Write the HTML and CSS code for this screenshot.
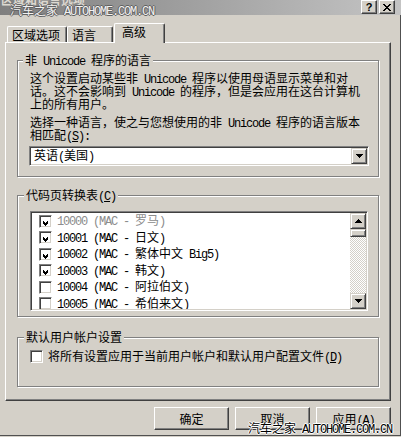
FILE: index.html
```html
<!DOCTYPE html>
<html>

	<head>
		<meta charset="UTF-8">
		<title>区域和语言选项</title>
		<link rel="stylesheet" href="styles.css">
	</head>

	<body>
		<div class="win">
			<div class="titlebar">
				<span class="title">区域和语言选项</span>
				<div class="capbtns">
					<span class="capbtn help">?</span>
					<span class="capbtn">
						<svg width="8" height="7" shape-rendering="crispEdges"><path d="M0 0h2v1H0z M6 0h2v1H6z M1 1h2v1H1z M5 1h2v1H5z M2 2h4v1H2z M3 3h2v1H3z M2 4h4v1H2z M1 5h2v1H1z M5 5h2v1H5z M0 6h2v1H0z M6 6h2v1H6z"/></svg>
					</span>
				</div>
			</div>

			<div class="content">
				<ul class="tabs">
					<li class="tab t1">区域选项</li>
					<li class="tab t2">语言</li>
					<li class="tab t3 current">高级</li>
				</ul>

				<div class="panel">
					<fieldset class="group g1">
						<legend>非<span class="en"> Unicode </span>程序的语言</legend>
						<p>
							<span class="line">这个设置启动某些非<span class="en"> Unicode </span>程序以使用母语显示菜单和对</span>
							<span class="line">话。这不会影响到<span class="en"> Unicode </span>的程序，但是会应用在这台计算机</span>
							<span class="line">上的所有用户。</span>
						</p>
						<p class="p2">
							<span class="line">选择一种语言，使之与您想使用的非<span class="en"> Unicode </span>程序的语言版本</span>
							<span class="line">相匹配<span class="en">(<u>S</u>):</span></span>
						</p>
						<div class="combo">
							<span class="combo-text">英语<span class="en">(</span>美国<span class="en">)</span></span>
							<span class="sbtn">
								<svg width="7" height="4" shape-rendering="crispEdges"><path d="M0 0h7v1H0z M1 1h5v1H1z M2 2h3v1H2z M3 3h1v1H3z"/></svg>
							</span>
						</div>
					</fieldset>

					<fieldset class="group g2">
						<legend>代码页转换表<span class="en">(<u>C</u>)</span></legend>
						<div class="listbox">
							<ul class="items">
								<li class="disabled">
									<span class="chk"><svg width="7" height="7" shape-rendering="crispEdges"><path d="M6 0h1v1H6z M5 1h2v1H5z M0 2h1v1H0z M4 2h3v1H4z M0 3h2v1H0z M3 3h3v1H3z M0 4h5v1H0z M1 5h3v1H1z M2 6h1v1H2z"/></svg></span>
									<span class="label"><span class="en">10000 (MAC - </span>罗马<span class="en">)</span></span>
								</li>
								<li>
									<span class="chk"><svg width="7" height="7" shape-rendering="crispEdges"><path d="M6 0h1v1H6z M5 1h2v1H5z M0 2h1v1H0z M4 2h3v1H4z M0 3h2v1H0z M3 3h3v1H3z M0 4h5v1H0z M1 5h3v1H1z M2 6h1v1H2z"/></svg></span>
									<span class="label"><span class="en">10001 (MAC - </span>日文<span class="en">)</span></span>
								</li>
								<li>
									<span class="chk"><svg width="7" height="7" shape-rendering="crispEdges"><path d="M6 0h1v1H6z M5 1h2v1H5z M0 2h1v1H0z M4 2h3v1H4z M0 3h2v1H0z M3 3h3v1H3z M0 4h5v1H0z M1 5h3v1H1z M2 6h1v1H2z"/></svg></span>
									<span class="label"><span class="en">10002 (MAC - </span>繁体中文<span class="en"> Big5)</span></span>
								</li>
								<li>
									<span class="chk"><svg width="7" height="7" shape-rendering="crispEdges"><path d="M6 0h1v1H6z M5 1h2v1H5z M0 2h1v1H0z M4 2h3v1H4z M0 3h2v1H0z M3 3h3v1H3z M0 4h5v1H0z M1 5h3v1H1z M2 6h1v1H2z"/></svg></span>
									<span class="label"><span class="en">10003 (MAC - </span>韩文<span class="en">)</span></span>
								</li>
								<li>
									<span class="chk"></span>
									<span class="label"><span class="en">10004 (MAC - </span>阿拉伯文<span class="en">)</span></span>
								</li>
								<li>
									<span class="chk"></span>
									<span class="label"><span class="en">10005 (MAC - </span>希伯来文<span class="en">)</span></span>
								</li>
							</ul>
							<div class="vscroll">
								<span class="sbtn">
									<svg width="7" height="4" shape-rendering="crispEdges"><path d="M3 0h1v1H3z M2 1h3v1H2z M1 2h5v1H1z M0 3h7v1H0z"/></svg>
								</span>
								<span class="thumb"></span>
								<span class="track"></span>
								<span class="sbtn">
									<svg width="7" height="4" shape-rendering="crispEdges"><path d="M0 0h7v1H0z M1 1h5v1H1z M2 2h3v1H2z M3 3h1v1H3z"/></svg>
								</span>
							</div>
						</div>
					</fieldset>

					<fieldset class="group g3">
						<legend>默认用户帐户设置</legend>
						<label class="check-row">
							<span class="chk"></span>
							<span>将所有设置应用于当前用户帐户和默认用户配置文件<span class="en">(<u>D</u>)</span></span>
						</label>
					</fieldset>
				</div>

				<div class="buttons">
					<span class="btn">确定</span>
					<span class="btn">取消</span>
					<span class="btn">应用<span class="en">(<u>A</u>)</span></span>
				</div>
			</div>

			<!-- 水印 -->
			<div class="wm wm-top">汽车之家<span class="en"> AUTOHOME.COM.CN</span></div>
			<div class="wm wm-bottom">汽车之家<span class="en"> AUTOHOME.COM.CN</span></div>
		</div>
	</body>

</html>
```

FILE: styles.css
```css
* {
	margin: 0;
	padding: 0;
	list-style: none;
	box-sizing: border-box;
}

body {
	width: 401px;
	height: 437px;
	overflow: hidden;
	background: #d4d0c8;
	font: 12px/14px "Noto Sans CJK SC", sans-serif;
	color: #000;
}

.en {
	font-family: "Liberation Mono", monospace;
	font-size: 12px;
	letter-spacing: -1.2px;
}

.win {
	position: relative;
	height: 436px;
	display: flex;
	flex-direction: column;
}

/* 标题栏 */
.titlebar {
	flex: none;
	height: 15px;
	display: flex;
	justify-content: space-between;
	align-items: flex-start;
	background: linear-gradient(to right, #7f7f7f, #c4c4c4);
	overflow: hidden;
}

.titlebar .title {
	margin: -7px 0 0 1px;
	color: #dcd8d0;
	font-weight: bold;
}

.capbtns {
	display: flex;
	gap: 2px;
	margin-right: 6px;
}

.capbtn {
	width: 16px;
	height: 14px;
	display: flex;
	align-items: center;
	justify-content: center;
	background: #d4d0c8;
	border: 1px solid;
	border-color: #fff #404040 #404040 #fff;
	box-shadow: inset -1px -1px #808080;
}

.capbtn.help {
	font: bold 11px/12px "Liberation Sans", sans-serif;
}

.content {
	flex: 1;
	padding: 8px 8px 0 5px;
	border-right: 1px solid #505050;
	border-bottom: 1px solid #505050;
}

/* 选项卡 */
.tabs {
	display: flex;
	align-items: flex-end;
	height: 19px;
}

.tab {
	height: 16px;
	padding: 1px 0 0 4px;
	background: #d4d0c8;
	border: 1px solid;
	border-bottom: 0;
	border-color: #fff #404040 #fff #fff;
	border-radius: 2px 2px 0 0;
	box-shadow: inset -1px 0 #808080;
	white-space: nowrap;
}

.t1 {
	width: 60px;
	margin-left: 2px;
}

.t2 {
	width: 46px;
}

.t3 {
	width: 51px;
	margin-left: 1px;
	padding-left: 7px;
}

.tab.current {
	position: relative;
	z-index: 1;
	height: 20px;
	margin-bottom: -1px;
	padding-top: 1px;
}

.panel {
	width: 386px;
	height: 359px;
	padding: 10px 0 0 11px;
	border: 1px solid;
	border-color: #fff #404040 #404040 #fff;
	box-shadow: inset -1px -1px #808080;
	overflow: hidden;
}

/* 分组框 */
.group {
	width: 362px;
	min-width: 0;
	border: 1px solid #808080;
	box-shadow: inset 1px 1px #fff, 1px 1px #fff;
}

.group legend {
	height: 14px;
	margin-left: -6px;
	padding: 0 2px;
	line-height: 14px;
	background: #d4d0c8;
	white-space: nowrap;
}

.g1 {
	padding: 4px 10px 10px 11px;
}

.g1 p {
	padding-left: 1px;
}

.g1 .line {
	display: block;
	height: 13px;
	line-height: 13px;
	white-space: nowrap;
}

.g1 .p2 {
	margin-top: 5px;
}

.combo {
	width: 340px;
	height: 20px;
	margin-top: 5px;
	display: flex;
	align-items: center;
	justify-content: space-between;
	background: #fff;
	border: 1px solid;
	border-color: #808080 #fff #fff #808080;
	box-shadow: inset 1px 1px #404040, inset -1px -1px #d4d0c8;
	padding: 1px;
}

.combo-text {
	padding-left: 3px;
}

.sbtn {
	flex: none;
	width: 16px;
	height: 16px;
	display: flex;
	align-items: center;
	justify-content: center;
	background: #d4d0c8;
	border: 1px solid;
	border-color: #d4d0c8 #404040 #404040 #d4d0c8;
	box-shadow: inset 1px 1px #fff, inset -1px -1px #808080;
}

.g2 {
	margin-top: 11px;
	padding: 9px 0 5px 12px;
}

.listbox {
	width: 338px;
	height: 100px;
	display: flex;
	background: #fff;
	border: 1px solid;
	border-color: #808080 #fff #fff #808080;
	box-shadow: inset 1px 1px #404040, inset -1px -1px #d4d0c8;
	padding: 1px;
}

.items {
	flex: 1;
	overflow: hidden;
}

.items li {
	height: 16.5px;
	display: flex;
	align-items: center;
	padding-left: 7px;
	white-space: nowrap;
}

.items li.disabled {
	color: #8c8c8c;
}

.chk {
	flex: none;
	width: 13px;
	height: 13px;
	margin-right: 5px;
	padding: 2px;
	display: flex;
	background: #fff;
	border: 1px solid;
	border-color: #808080 #fff #fff #808080;
	box-shadow: inset 1px 1px #404040, inset -1px -1px #d4d0c8;
}

.chk svg {
	margin: 1px;
}

.vscroll {
	flex: none;
	width: 16px;
	display: flex;
	flex-direction: column;
}

.thumb {
	height: 8px;
	background: #d4d0c8;
	border: 1px solid;
	border-color: #d4d0c8 #404040 #404040 #d4d0c8;
	box-shadow: inset 1px 1px #fff, inset -1px -1px #808080;
}

.track {
	flex: 1;
	background: repeating-conic-gradient(#d4d0c8 0 25%, #fff 0 50%) 0 0 / 2px 2px;
}

.g3 {
	margin-top: 13px;
	padding: 6px 0 23px 12px;
}

.check-row {
	height: 13px;
	display: flex;
	align-items: center;
	white-space: nowrap;
}

/* 底部按钮 */
.buttons {
	width: 386px;
	margin-top: 6px;
	display: flex;
	justify-content: flex-end;
	gap: 6px;
}

.btn {
	width: 75px;
	height: 23px;
	line-height: 21px;
	text-align: center;
	background: #d4d0c8;
	border: 1px solid;
	border-color: #fff #404040 #404040 #fff;
	box-shadow: inset -1px -1px #808080;
}

/* 水印 */
.wm {
	position: absolute;
	white-space: nowrap;
	line-height: 12px;
}

.wm-top {
	left: 10px;
	top: 4px;
	color: #f2f2f2;
	text-shadow: 1px 0 #606060, -1px 0 #606060, 0 1px #606060, 0 -1px #606060;
}

.wm-bottom {
	left: 248px;
	top: 422px;
	color: #000;
	text-shadow: 1px 0 #fff, -1px 0 #fff, 0 1px #fff, 0 -1px #fff;
}
```
